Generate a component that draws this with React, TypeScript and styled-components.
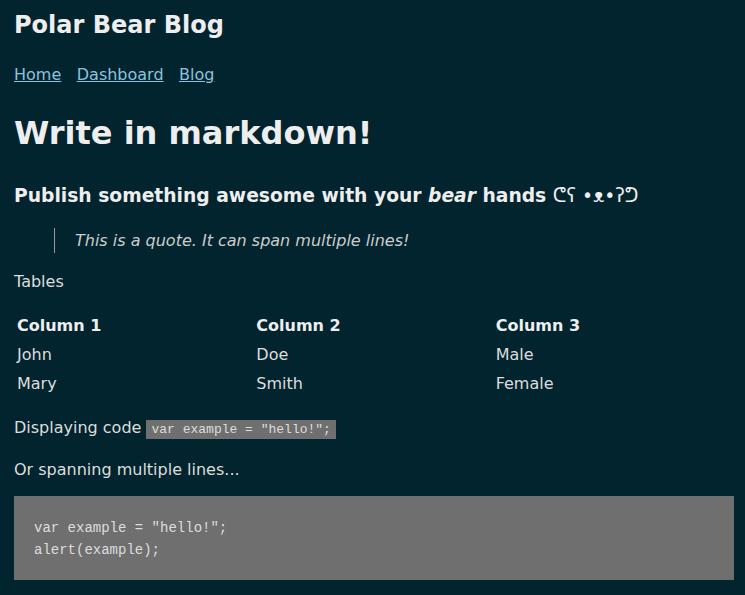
import React from "react";
import styled, { createGlobalStyle } from "styled-components";

const Global = createGlobalStyle`
  html, body { margin: 0; padding: 0; background: #01242e; }
  body {
    font-family: "DejaVu Sans", Verdana, sans-serif;
    font-size: 16px;
    line-height: 1.5;
    color: #ddd;
  }
`;

const Page = styled.div`
  width: 720px;
  padding: 0 14px;
  overflow-wrap: break-word;
`;

const Header = styled.header``;

const Title = styled.h2`
  font-size: 24px;
  line-height: 36px;
  margin: 7px 0 20px;
  color: #eee;
  font-weight: bold;
`;

const Nav = styled.nav`
  margin: 0 0 16px;
  display: flex;
  flex-wrap: wrap;
`;

const NavLink = styled.a`
  color: #8cc2dd;
  text-decoration: underline;
  margin-right: 15.5px;
`;

const Content = styled.main`
  line-height: 1.6;
`;

const H1 = styled.h1`
  font-size: 32px;
  margin: 21px 0 22px;
  color: #eee;
`;

const H3 = styled.h3`
  font-size: 18.72px;
  margin: 19.5px 0 16.5px;
  color: #eee;
`;

const Kaomoji = styled.span`
  font-weight: normal;
`;

const Quote = styled.blockquote`
  margin: 16px 40px;
  border-left: 1px solid #999;
  color: #ccc;
  padding-left: 20px;
  font-style: italic;
`;

const P = styled.p<{ $before?: number; $after?: number }>`
  margin: ${(p) => p.$before ?? 16}px 0 ${(p) => p.$after ?? 16}px;
`;

const Table = styled.table`
  width: 100%;
  border-spacing: 2px;
  line-height: 25px;
`;

const Th = styled.th`
  text-align: left;
  padding: 1px;
  color: #eee;
  font-weight: bold;
`;

const Td = styled.td`
  padding: 1px;
`;

const Code = styled.code`
  font-family: "Liberation Mono", monospace;
  font-size: 13px;
  padding: 2px 5px;
  background-color: #6f6f6f;
`;

const Pre = styled.pre`
  margin: 13px 0;
  font-family: "Liberation Mono", monospace;
`;

const PreCode = styled.code`
  display: block;
  padding: 22px 20px 18px;
  white-space: pre-wrap;
  font-family: "Liberation Mono", monospace;
  font-size: 14px;
  line-height: 21.65px;
  color: #ddd;
  background-color: #6f6f6f;
`;

const rows = [
  ["John", "Doe", "Male"],
  ["Mary", "Smith", "Female"],
];

export default function App() {
  return (
    <>
      <Global />
      <Page>
        <Header>
          <Title>Polar Bear Blog</Title>
          <Nav>
            <NavLink href="#">Home</NavLink>
            <NavLink href="#">Dashboard</NavLink>
            <NavLink href="#">Blog</NavLink>
          </Nav>
        </Header>
        <Content>
          <H1>Write in markdown!</H1>
          <H3>
            Publish something awesome with your <i>bear</i> hands{" "}
            <Kaomoji>ᕦʕ •ᴥ•ʔᕤ</Kaomoji>
          </H3>
          <Quote>This is a quote. It can span multiple lines!</Quote>
          <P $after={15}>Tables</P>
          <Table>
            <thead>
              <tr>
                <Th>Column 1</Th>
                <Th>Column 2</Th>
                <Th>Column 3</Th>
              </tr>
            </thead>
            <tbody>
              {rows.map((r) => (
                <tr key={r[0]}>
                  {r.map((c) => (
                    <Td key={c}>{c}</Td>
                  ))}
                </tr>
              ))}
            </tbody>
          </Table>
          <P>
            Displaying code <Code>var example = "hello!";</Code>
          </P>
          <P $before={15} $after={14}>
            Or spanning multiple lines...
          </P>
          <Pre>
            <PreCode>{`var example = "hello!";
alert(example);`}</PreCode>
          </Pre>
        </Content>
      </Page>
    </>
  );
}
